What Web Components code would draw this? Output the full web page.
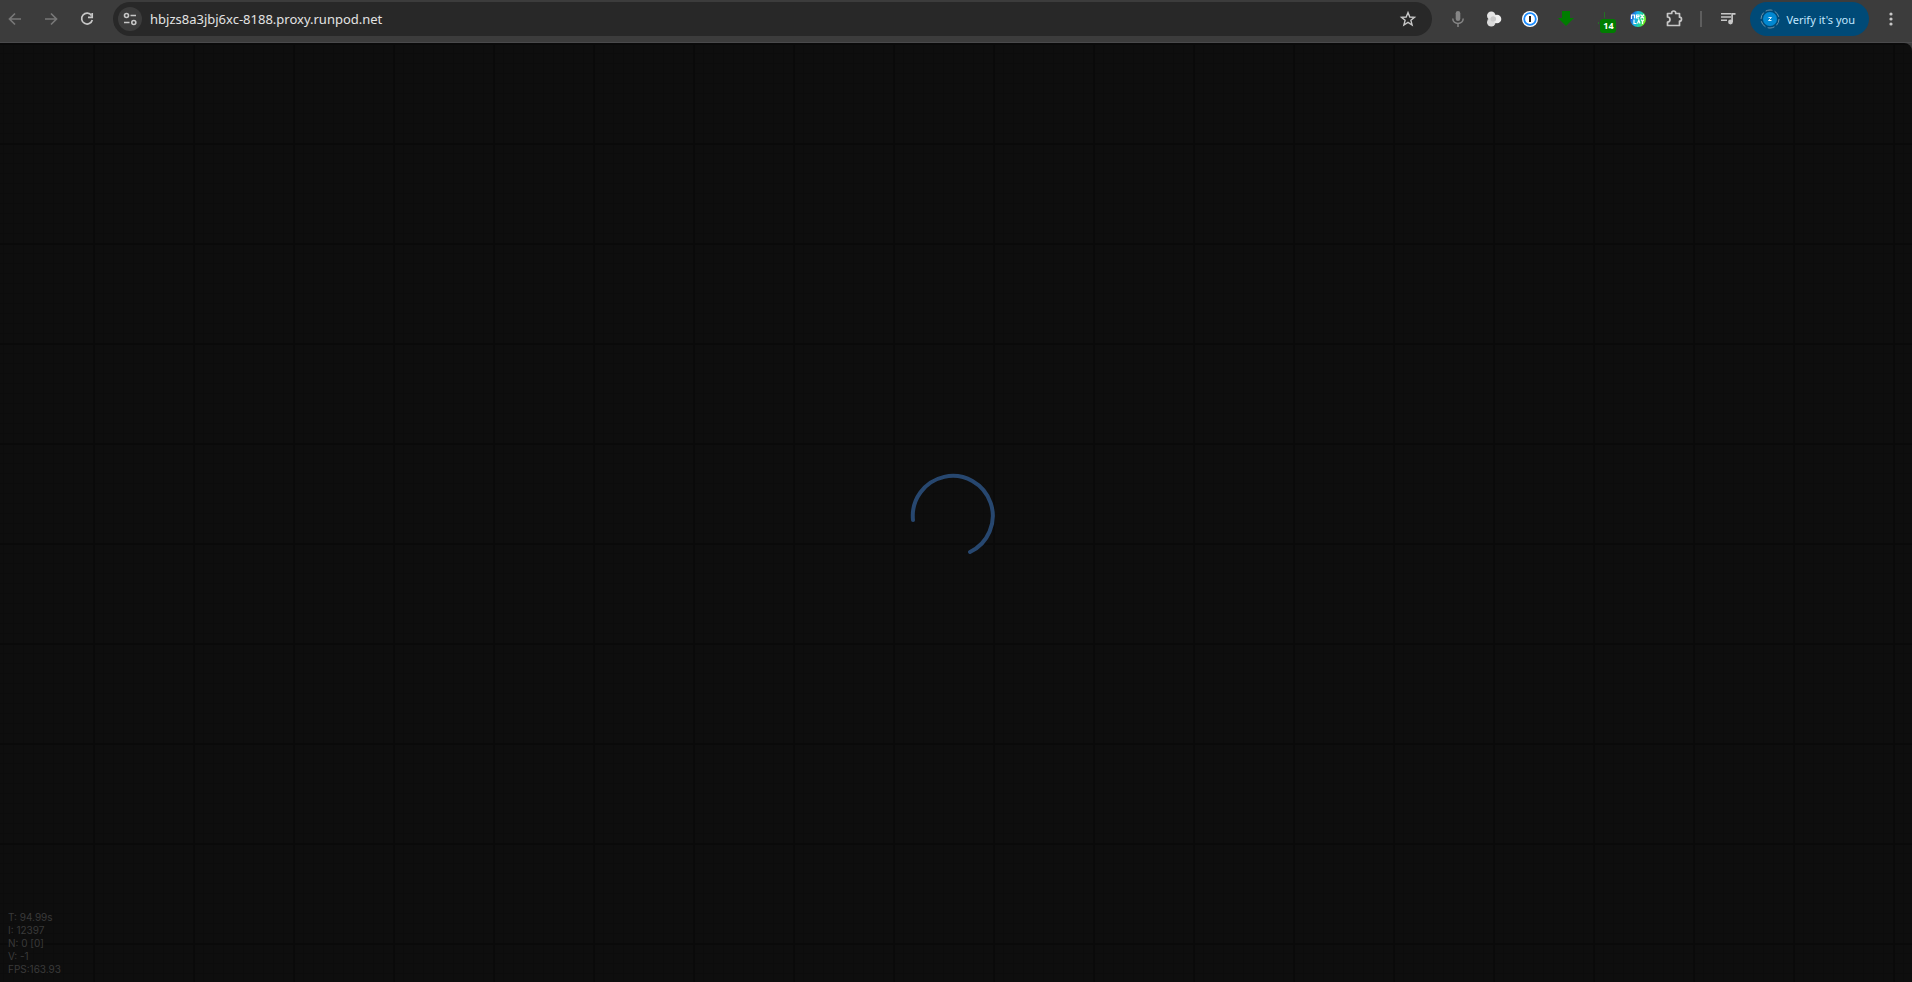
<!DOCTYPE html>
<html lang="en">
<head>
<meta charset="utf-8">
<title>hbjzs8a3jbj6xc-8188.proxy.runpod.net</title>
<style>
  html, body {
    height: 100%;
    margin: 0;
    background: #3c3c3c;
  }
</style>
</head>
<body>
<app-window></app-window>
<script>
class IconButton extends HTMLElement {

  constructor() {
    super()
    this.shadow = this.attachShadow({ mode: 'open' })
  }

  connectedCallback() {
    this.shadow.innerHTML =
    /*html*/`
      <style>
        :host {
          display: block;
          flex: none;
        }

        button {
          all: unset;
          display: grid;
          place-items: center;
          width: 24px;
          height: 24px;
          cursor: pointer;
        }
      </style>
      <button aria-label="${this.getAttribute('label')}"><slot></slot></button>
    `
  }
}

class BrowserBar extends HTMLElement {

  constructor() {
    super()
    this.shadow = this.attachShadow({ mode: 'open' })
  }

  connectedCallback() {
    this.shadow.innerHTML =
    /*html*/`
      <style>
        * {
          box-sizing: border-box;
        }

        :host {
          display: flex;
          align-items: center;
          box-sizing: border-box;
          height: 43px;
          padding: 0 9px 4px 3px;
          background: #3c3c3c;
          border-bottom: 1px solid #4a4a4c;
          font-family: "Noto Sans", sans-serif;
        }

        svg {
          display: block;
          width: 24px;
          height: 24px;
          fill: none;
          stroke: #c7c7c7;
          stroke-width: 2;
        }

        .navigation {
          display: flex;
          gap: 12px;
          margin-right: 14px;
        }

        .off {
          stroke: #777;
        }

        .address {
          flex: 1;
          display: flex;
          align-items: center;
          height: 34px;
          padding: 0 12px 0 5px;
          border-radius: 17px;
          background: #282828;
        }

        .site {
          display: grid;
          place-items: center;
          width: 24px;
          height: 24px;
          margin-right: 8px;
          border-radius: 12px;
          background: #3c3c3c;
        }

        input {
          flex: 1;
          min-width: 0;
          padding: 0;
          border: none;
          outline: none;
          background: none;
          color: #e3e3e3;
          font: 13px "Noto Sans", sans-serif;
        }

        .extensions {
          display: flex;
          gap: 12px;
          margin-left: 14px;
        }

        .download {
          position: relative;
        }

        .badge {
          position: absolute;
          left: 10px;
          top: 12px;
          width: 16px;
          height: 14px;
          border-radius: 3px;
          background: #007d00;
          color: white;
          font: bold 9px/14px "Noto Sans", sans-serif;
          text-align: center;
        }

        .line {
          width: 2px;
          height: 16px;
          margin: 0 14px;
          background: #5e5e5e;
        }

        .verify {
          all: unset;
          display: flex;
          align-items: center;
          gap: 6px;
          height: 34px;
          margin: 0 10px;
          padding: 0 14px 0 10px;
          border-radius: 17px;
          background: #004a77;
          color: #c2e7ff;
          font: 11px "Noto Sans", sans-serif;
          white-space: nowrap;
          box-sizing: border-box;
          cursor: pointer;
        }

        .verify svg {
          width: 20px;
          height: 20px;
        }
      </style>

      <div class="navigation">
        <icon-button label="Back"><svg class="off" viewBox="0 0 24 24"><path d="M18 12H7M12 6.500L6.500 12L12 17.500" stroke-width="1.700"/></svg></icon-button>
        <icon-button label="Forward"><svg class="off" viewBox="0 0 24 24"><path d="M6 12H17M12 6.500L17.500 12L12 17.500" stroke-width="1.700"/></svg></icon-button>
        <icon-button label="Reload"><svg viewBox="0 0 24 24"><path d="M16.500 8.500A5.400 5.400 0 1 0 17.300 13" stroke-width="1.700"/><path d="M17.200 6V10.300H13" stroke-width="1.700"/></svg></icon-button>
      </div>

      <div class="address">
        <div class="site">
          <svg viewBox="0 0 24 24"><g stroke-width="1.600"><circle cx="8.500" cy="8.500" r="2"/><path d="M12.500 8.500H18M6 15.500H11.500"/><circle cx="15.800" cy="15.500" r="2"/></g></svg>
        </div>
        <input type="text" aria-label="Address" value="hbjzs8a3jbj6xc-8188.proxy.runpod.net">
        <icon-button label="Bookmark this tab"><svg viewBox="0 0 24 24"><path d="M12 5.600L13.800 10L18.500 10.300L14.900 13.300L16.100 18L12 15.400L7.900 18L9.100 13.300L5.500 10.300L10.200 10Z" stroke-width="1.400"/></svg></icon-button>
      </div>

      <div class="extensions">
        <icon-button label="Voice"><svg viewBox="0 0 24 24"><rect x="9.700" y="4" width="4.600" height="10" rx="2.300" fill="#858585" stroke="none"/><path d="M6.800 11.500C6.800 18 17.200 18 17.200 11.500M12 16V20" stroke="#858585" stroke-width="1.500"/></svg></icon-button>
        <icon-button label="Clusters"><svg viewBox="0 0 24 24"><g stroke="none"><circle cx="9.300" cy="8.700" r="4.300" fill="#e4e4e4"/><circle cx="9.300" cy="15.300" r="4.300" fill="#dadada"/><circle cx="15" cy="12" r="4.300" fill="#eee"/><circle cx="11.300" cy="12" r="2.800" fill="#c9c9c9"/></g></svg></icon-button>
        <icon-button label="Passwords"><svg viewBox="0 0 24 24"><circle cx="12" cy="12" r="8" fill="#fff" stroke="none"/><circle cx="12" cy="12" r="5.800" stroke="#1a8cff" stroke-width="1.800"/><path d="M12 9V15" stroke="#222"/></svg></icon-button>
        <icon-button label="Save page"><svg viewBox="0 0 24 24"><path d="M8 4H16V11H20L12 19L4 11H8Z" fill="#007d00" stroke="none"/></svg></icon-button>
        <div class="download">
          <icon-button label="Downloads"><svg viewBox="0 0 24 24"><path d="M14.500 5V11M8.500 15V17" stroke="#247024" stroke-width="1"/></svg></icon-button>
          <span class="badge">14</span>
        </div>
        <icon-button label="Player"><svg viewBox="0 0 24 24"><defs><linearGradient id="sky" x2="1" y2=".3"><stop offset="0" stop-color="#2424b8"/><stop offset=".45" stop-color="#18b0f0"/><stop offset=".8" stop-color="#20d890"/><stop offset="1" stop-color="#70f020"/></linearGradient></defs><circle cx="12" cy="12" r="8" fill="url(#sky)" stroke="none"/><path d="M5.500 12V8H8.500V11.500M13 11H10.500V8H13V9.500H10.500M14.500 7.500L18 11.500M18 7.500L14.500 11.500M8 12.500V16.500H10.500M11.500 16.500L12.800 13L14 16.500M15 12.500L16.500 14.500L18 12.500M16.500 14.500V17" stroke="#fff" stroke-width="1.200"/></svg></icon-button>
        <icon-button label="Extensions"><svg viewBox="0 0 24 24"><path d="M5.500 6.500H9.700V6A2 2 0 0 1 13.700 6V6.500H17.500V10.200A2 2 0 0 1 17.500 14.200V18.500H5.500V15A2.500 2.500 0 0 0 5.500 10Z" stroke-width="1.700" stroke-linejoin="round"/></svg></icon-button>
      </div>
      <div class="line"></div>
      <icon-button label="Media"><svg viewBox="0 0 24 24"><path d="M5 6.800H15M5 10H15M5 13.200H11" stroke-width="1.600"/><circle cx="14.500" cy="15" r="2.400" fill="#c7c7c7" stroke="none"/><path d="M16.100 15V6.800H19.500" stroke-width="1.700"/></svg></icon-button>
      <button class="verify">
        <svg viewBox="0 0 20 20"><circle cx="10" cy="10" r="9" stroke="#6d91a8" stroke-width="1" stroke-dasharray="7 2.400"/><circle cx="10" cy="10" r="7" fill="#0288d1" stroke="none"/><path d="M8.500 8.500H11.500L8.500 11.500H11.500" stroke="#d5efff" stroke-width="1"/></svg>
        <span>Verify it's you</span>
      </button>
      <icon-button label="Menu"><svg viewBox="0 0 24 24"><g fill="#c7c7c7" stroke="none"><circle cx="12" cy="7" r="1.600"/><circle cx="12" cy="12" r="1.600"/><circle cx="12" cy="17" r="1.600"/></g></svg></icon-button>
    `
  }
}

class GraphCanvas extends HTMLElement {

  constructor() {
    super()
    this.shadow = this.attachShadow({ mode: 'open' })
  }

  connectedCallback() {
    this.shadow.innerHTML =
    /*html*/`
      <style>
        :host {
          display: grid;
          grid-template: 1fr / 1fr;
          overflow: hidden;
          border-radius: 0 8px 0 0;
          background:
            linear-gradient(90deg, #0a0a0a 2px, transparent 2px) 93px 0 / 100px 100px,
            linear-gradient(#0a0a0a 2px, transparent 2px) 0 0 / 100px 100px,
            linear-gradient(90deg, #0c0c0c 1px, transparent 1px) 3px 0 / 10px 10px,
            linear-gradient(#0c0c0c 1px, transparent 1px) 0 0 / 10px 10px,
            #0e0e0e;
        }

        ::slotted(*) {
          grid-area: 1 / 1;
        }
      </style>
      <slot></slot>
    `
  }
}

class LoadingSpinner extends HTMLElement {

  constructor() {
    super()
    this.shadow = this.attachShadow({ mode: 'open' })
  }

  connectedCallback() {
    this.shadow.innerHTML =
    /*html*/`
      <style>
        :host {
          display: block;
          place-self: center;
        }

        svg {
          display: block;
          width: 100px;
          height: 100px;
          fill: none;
          stroke: #27476f;
          stroke-width: 4;
          stroke-linecap: round;
        }
      </style>
      <svg viewBox="0 0 100 100" role="img" aria-label="Loading"><path d="M7 57A40 40 0 1 1 64 89"/></svg>
    `
  }
}

class GraphStats extends HTMLElement {

  constructor() {
    super()
    this.shadow = this.attachShadow({ mode: 'open' })
  }

  connectedCallback() {
    this.shadow.innerHTML =
    /*html*/`
      <style>
        :host {
          display: block;
          place-self: end start;
          padding: 0 8px 6px;
          color: #3a3a3a;
          font: 10px/13px Inter, sans-serif;
        }
      </style>
      <div>T: 94.99s</div>
      <div>I: 12397</div>
      <div>N: 0 [0]</div>
      <div>V: -1</div>
      <div>FPS:163.93</div>
    `
  }
}

class AppWindow extends HTMLElement {

  constructor() {
    super()
    this.shadow = this.attachShadow({ mode: 'open' })
  }

  connectedCallback() {
    this.shadow.innerHTML =
    /*html*/`
      <style>
        :host {
          display: flex;
          flex-direction: column;
          height: 100vh;
        }

        browser-bar {
          flex: none;
        }

        graph-canvas {
          flex: 1;
        }
      </style>
      <browser-bar></browser-bar>
      <graph-canvas>
        <loading-spinner></loading-spinner>
        <graph-stats></graph-stats>
      </graph-canvas>
    `
  }
}

customElements.define('icon-button', IconButton)
customElements.define('browser-bar', BrowserBar)
customElements.define('graph-canvas', GraphCanvas)
customElements.define('loading-spinner', LoadingSpinner)
customElements.define('graph-stats', GraphStats)
customElements.define('app-window', AppWindow)
</script>
</body>
</html>
